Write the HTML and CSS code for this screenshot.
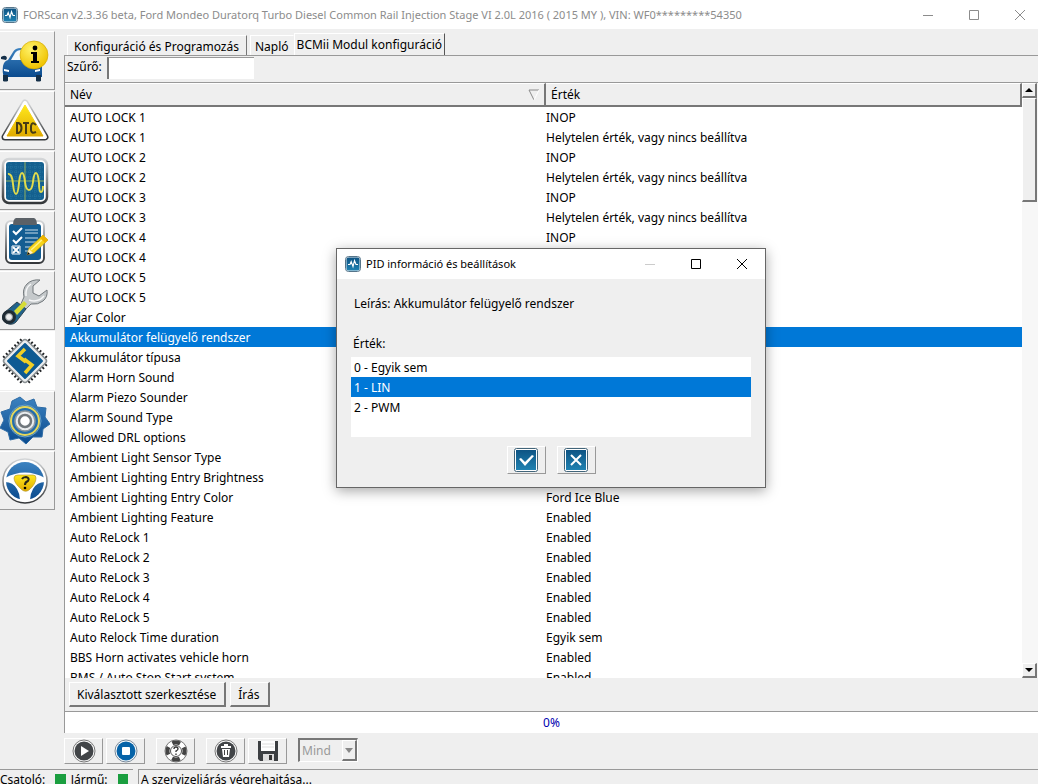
FILE: index.html
```html
<!DOCTYPE html>
<html lang="hu">
<head>
    <meta charset="UTF-8">
    <meta name="viewport" content="width=device-width, initial-scale=1.0">
    <title>FORScan</title>
    <link rel="stylesheet" href="styles.css">
</head>
<body>
    <!-- Shared gradients and the app logo -->
    <svg class="defs" width="0" height="0" aria-hidden="true">
        <defs>
            <linearGradient id="metal" x1="0" y1="0" x2="0" y2="1">
                <stop offset="0" stop-color="#d4d6d8"/>
                <stop offset="1" stop-color="#34373a"/>
            </linearGradient>
            <linearGradient id="blue" x1="0" y1="0" x2="0" y2="1">
                <stop offset="0" stop-color="#3c82c0"/>
                <stop offset="1" stop-color="#0b4b8e"/>
            </linearGradient>
            <linearGradient id="teal" x1="0" y1="0" x2="0" y2="1">
                <stop offset="0" stop-color="#0e5484"/>
                <stop offset="1" stop-color="#1f82b2"/>
            </linearGradient>
            <linearGradient id="yellow" x1="0" y1="0" x2="0" y2="1">
                <stop offset="0" stop-color="#ffe81c"/>
                <stop offset="1" stop-color="#e0ab00"/>
            </linearGradient>
            <radialGradient id="ball" cx=".4" cy=".3" r=".7">
                <stop offset="0" stop-color="#fff36a"/>
                <stop offset="1" stop-color="#efc200"/>
            </radialGradient>
            <symbol id="logo" viewBox="0 0 16 16">
                <rect x=".5" y=".5" width="15" height="15" rx="3" fill="#e8eef2" stroke="#56758a"/>
                <rect x="1.5" y="1.5" width="13" height="13" rx="2" fill="url(#teal)"/>
                <path d="M3 8.500h2l1.200-3 1.800 5 1.500-6 1.500 4H13" fill="none" stroke="#fff" stroke-width="1.100"/>
            </symbol>
        </defs>
    </svg>

    <div class="window">
        <header class="titlebar">
            <svg class="logo"><use href="#logo"/></svg>
            <span class="title">FORScan v2.3.36 beta, Ford Mondeo Duratorq Turbo Diesel Common Rail Injection Stage VI 2.0L 2016 ( 2015 MY ), VIN: WF0*********54350</span>
            <div class="win-buttons">
                <button type="button" aria-label="Minimize"><svg viewBox="0 0 12 12"><path d="M1 6.500h10"/></svg></button>
                <button type="button" aria-label="Maximize"><svg viewBox="0 0 12 12"><path d="M1.500 1.500h9v9h-9z"/></svg></button>
                <button type="button" aria-label="Close"><svg viewBox="0 0 12 12"><path d="M1 1l10 10M11 1L1 11"/></svg></button>
            </div>
        </header>

        <div class="content">
            <nav class="sidebar">
                <button type="button" aria-label="Jármű">
                    <svg viewBox="0 0 50 50">
                        <path d="M3 30q1-5 5-6l5-8q2-4 8-4h13q4 0 7 8l1 8v13H4q-2-4-1-11z" fill="url(#blue)"/>
                        <path d="M11 24l4-7q2-3 6-3h10v10z" fill="#f4f8fb"/>
                        <path d="M1 21q5-3 6 1l-1 2-5-1zM3 39h5v6q-3 1-5 0zM36 39h5v6q-3 1-5 0z" fill="#153049"/>
                        <path d="M4 33l5 1v2l-5-1zM35 34l5-1v2l-5 1z" fill="#fff"/>
                        <circle cx="34" cy="19" r="14" fill="url(#ball)" stroke="#cfa500" stroke-width=".6"/>
                        <circle cx="35" cy="12" r="2.400"/>
                        <path d="M31 16h6v9h2v2h-8v-2h2v-7h-2z"/>
                    </svg>
                </button>
                <button type="button" aria-label="DTC">
                    <svg viewBox="0 0 50 50">
                        <path d="M25 7L45 41H5z" fill="#fff" stroke="url(#metal)" stroke-width="7" stroke-linejoin="round"/>
                        <path d="M25 7L45 41H5z" fill="#fff" stroke="#fff" stroke-width="4" stroke-linejoin="round"/>
                        <path d="M25 9L43 40H7z" fill="url(#yellow)" stroke="url(#yellow)" stroke-width="1" stroke-linejoin="round"/>
                        <path d="M17 27v10h1.500q3-1 3-5t-3-5zM23 27h6M26 27v11M36 29q-4-4-5 1v4q0 4 5 2" fill="none" stroke="#463c15" stroke-width="2"/>
                    </svg>
                </button>
                <button type="button" aria-label="Oszcilloszkóp">
                    <svg viewBox="0 0 50 50">
                        <rect x="3" y="3" width="44" height="44" rx="6" fill="#fff" stroke="url(#metal)" stroke-width="2.500"/>
                        <rect x="6" y="6" width="38" height="38" rx="3" fill="#14608f"/>
                        <path d="M11 6v38M16 6v38M21 6v38M30 6v38M35 6v38M40 6v38M6 11h38M6 16h38M6 21h38M6 30h38M6 35h38M6 40h38" stroke="#2b80a6" stroke-width=".7" stroke-dasharray="1 1"/>
                        <path d="M25 6v38M6 25h38" stroke="#8fae60" stroke-width="1"/>
                        <path d="M8 18q4-1 5 10 1 10 3 10t3-11q1-10 3-10t3 9q1 8 4 8t4-8q1-9 3-9t3 10q0 9 2 9t2-6" fill="none" stroke="#e3dc4b" stroke-width="2"/>
                    </svg>
                </button>
                <button type="button" aria-label="Tesztek">
                    <svg viewBox="0 0 50 50">
                        <rect x="6" y="5" width="38" height="42" rx="5" fill="#fff" stroke="url(#metal)" stroke-width="2"/>
                        <rect x="9" y="8" width="32" height="36" rx="3" fill="#135d92"/>
                        <path d="M16 2h18q3 1 3 7H13q0-6 3-7z" fill="#5b6167"/>
                        <path d="M13 15l3 3 6-6M13 24l3 3 6-6M13 31l6 6M19 31l-6 6" fill="none" stroke="#fff" stroke-width="2"/>
                        <path d="M12 30h8v8h-8z" fill="none" stroke="#fff"/>
                        <path d="M25 14h13M25 17h13M25 22h13M25 26h11M25 31h8M25 35h4" stroke="#c8dce8" stroke-width="1.200"/>
                        <path d="M27 39l2-7 14-13 5 5-14 13z" fill="#f6d51b" stroke="#b69009" stroke-width=".6"/>
                        <path d="M31 34l14-13" stroke="#fff28e" stroke-width="1.500"/>
                        <path d="M40 22l3-3 5 5-3 3z" fill="#efb400"/>
                        <path d="M27 39l2-6 4 4z" fill="#ffeecb"/><path d="M27 39l1-3 2 2z"/>
                    </svg>
                </button>
                <button type="button" aria-label="Szerviz">
                    <svg viewBox="0 0 50 50">
                        <path d="M20 30L24 21q-2-8 3-13 5-5 13-4l-7 6 0 7 6 3 8-6q1 7-4 11-5 4-12 3L23 36z" fill="#c5c9cb" stroke="#73797d"/>
                        <path d="M26 20q-1-8 5-12M29 24q9 3 15-4" fill="none" stroke="#f6f7f8" stroke-width="1.500"/>
                        <path d="M17 26l9 7-10 13q-4 4-10 1-6-4-2-10z" fill="#20638c" stroke="#2f4552"/>
                        <path d="M14 35l10-10 3 3-10 11z" fill="#d6dc35"/>
                        <circle cx="9" cy="41" r="7" fill="#202b33"/>
                        <circle cx="9" cy="41" r="3.500" fill="#eee" stroke="#8b9398"/>
                    </svg>
                </button>
                <button type="button" class="current" aria-label="Konfiguráció és Programozás">
                    <svg viewBox="0 0 50 50">
                        <g transform="rotate(45 25 25)">
                            <path d="M13 6v38M17 6v38M21 6v38M25 6v38M29 6v38M33 6v38M37 6v38M6 13h38M6 17h38M6 21h38M6 25h38M6 29h38M6 33h38M6 37h38" stroke="#202326" stroke-width="1.800"/>
                            <rect x="9" y="9" width="32" height="32" rx="3" fill="#eceeef" stroke="#8b9194" stroke-width="1.500"/>
                            <rect x="12" y="12" width="26" height="26" rx="1" fill="#0d5a93"/>
                        </g>
                        <path d="M25 13l-7 7 8 6M25 37l7-8-8-6" fill="none" stroke="#f1cf25" stroke-width="3.500"/>
                    </svg>
                </button>
                <button type="button" aria-label="Beállítások">
                    <svg viewBox="0 0 50 50">
                        <path d="M20 1l6 5 8-3 3 8 9 1-1 9 5 7-7 5-1 8-9 0-7 7-7-6-9 2-2-8-8-4 4-8-3-8 9-3 2-8z" fill="url(#blue)" stroke="#2e6ca6"/>
                        <circle cx="25" cy="25" r="16" fill="#226dac" stroke="#6ba0c5" stroke-width="1"/>
                        <circle cx="25" cy="25" r="14" fill="none" stroke="#e6d75a" stroke-width="2"/>
                        <circle cx="25" cy="25" r="10" fill="#e9ecee" stroke="#8b979e" stroke-width="1.500"/>
                        <circle cx="25" cy="25" r="6" fill="#fff" stroke="#70777c" stroke-width="2.500"/>
                    </svg>
                </button>
                <button type="button" aria-label="Súgó">
                    <svg viewBox="0 0 50 50">
                        <circle cx="25" cy="25" r="22" fill="#fff" stroke="url(#metal)" stroke-width="1.500"/>
                        <circle cx="25" cy="25" r="19" fill="url(#blue)"/>
                        <path d="M5 22Q25 11 45 22v4q-8 0-12 7-3 5-3 11H20q0-6-3-11-4-7-12-7z" fill="#fff"/>
                        <path d="M18 19h15q3 0 3 3 0 6-7 12-4 3-8-1-7-6-7-11 0-3 4-3z" fill="url(#yellow)" stroke="#ad922a" stroke-width=".6"/>
                        <path d="M22 23q1-2 4-2 4 1 2 4-3 1-3 4" fill="none" stroke="#272719" stroke-width="2"/>
                        <circle cx="25" cy="32" r="1.300"/>
                    </svg>
                </button>
            </nav>

            <main class="main">
                <div class="tabs" role="tablist">
                    <button type="button" role="tab">Konfiguráció és Programozás</button>
                    <button type="button" role="tab">Napló</button>
                    <button type="button" role="tab" class="active" aria-selected="true">BCMii Modul konfiguráció</button>
                </div>

                <section class="panel">
                    <div class="filter">
                        <label for="filter">Szűrő:</label>
                        <input type="text" id="filter">
                    </div>

                    <div class="list">
                        <div class="table-wrap">
                            <table>
                                <thead>
                                    <tr>
                                        <th class="col-name"><div class="th-inner">Név <svg viewBox="0 0 12 12"><path d="M11 1H1l5 10" stroke="#8a8a8a" fill="none"/><path d="M6 11l5-10" stroke="#fff"/></svg></div></th>
                                        <th>Érték</th>
                                    </tr>
                                </thead>
                                <tbody>
                                    <tr><td>AUTO LOCK 1</td><td>INOP</td></tr>
                                    <tr><td>AUTO LOCK 1</td><td>Helytelen érték, vagy nincs beállítva</td></tr>
                                    <tr><td>AUTO LOCK 2</td><td>INOP</td></tr>
                                    <tr><td>AUTO LOCK 2</td><td>Helytelen érték, vagy nincs beállítva</td></tr>
                                    <tr><td>AUTO LOCK 3</td><td>INOP</td></tr>
                                    <tr><td>AUTO LOCK 3</td><td>Helytelen érték, vagy nincs beállítva</td></tr>
                                    <tr><td>AUTO LOCK 4</td><td>INOP</td></tr>
                                    <tr><td>AUTO LOCK 4</td><td></td></tr>
                                    <tr><td>AUTO LOCK 5</td><td></td></tr>
                                    <tr><td>AUTO LOCK 5</td><td></td></tr>
                                    <tr><td>Ajar Color</td><td></td></tr>
                                    <tr class="selected"><td>Akkumulátor felügyelő rendszer</td><td></td></tr>
                                    <tr><td>Akkumulátor típusa</td><td></td></tr>
                                    <tr><td>Alarm Horn Sound</td><td></td></tr>
                                    <tr><td>Alarm Piezo Sounder</td><td></td></tr>
                                    <tr><td>Alarm Sound Type</td><td></td></tr>
                                    <tr><td>Allowed DRL options</td><td></td></tr>
                                    <tr><td>Ambient Light Sensor Type</td><td></td></tr>
                                    <tr><td>Ambient Lighting Entry Brightness</td><td></td></tr>
                                    <tr><td>Ambient Lighting Entry Color</td><td>Ford Ice Blue</td></tr>
                                    <tr><td>Ambient Lighting Feature</td><td>Enabled</td></tr>
                                    <tr><td>Auto ReLock 1</td><td>Enabled</td></tr>
                                    <tr><td>Auto ReLock 2</td><td>Enabled</td></tr>
                                    <tr><td>Auto ReLock 3</td><td>Enabled</td></tr>
                                    <tr><td>Auto ReLock 4</td><td>Enabled</td></tr>
                                    <tr><td>Auto ReLock 5</td><td>Enabled</td></tr>
                                    <tr><td>Auto Relock Time duration</td><td>Egyik sem</td></tr>
                                    <tr><td>BBS Horn activates vehicle horn</td><td>Enabled</td></tr>
                                    <tr><td>BMS / Auto Stop Start system</td><td>Enabled</td></tr>
                                </tbody>
                            </table>
                        </div>
                        <div class="scrollbar">
                            <button type="button" aria-label="Fel"><svg viewBox="0 0 8 4"><path d="M4 0l4 4H0z"/></svg></button>
                            <div class="thumb"></div>
                            <button type="button" class="down" aria-label="Le"><svg viewBox="0 0 8 4"><path d="M0 0h8L4 4z"/></svg></button>
                        </div>
                    </div>

                    <div class="actions">
                        <button type="button">Kiválasztott szerkesztése</button>
                        <button type="button">Írás</button>
                    </div>
                </section>

                <div class="progress">0%</div>

                <div class="toolbar">
                    <button type="button" aria-label="Indítás">
                        <svg viewBox="0 0 24 24"><circle cx="12" cy="12" r="11" fill="#fff" stroke="#777"/><circle cx="12" cy="12" r="9.500" fill="#424548"/><path d="M9 7l8 5-8 5z" fill="#fff"/></svg>
                    </button>
                    <button type="button" class="group-end" aria-label="Leállítás">
                        <svg viewBox="0 0 24 24"><circle cx="12" cy="12" r="11" fill="#fff" stroke="#789"/><circle cx="12" cy="12" r="9.500" fill="#0663a8"/><rect x="8" y="8" width="8" height="8" rx="1" fill="#fff"/></svg>
                    </button>
                    <button type="button" class="group-end" aria-label="Súgó">
                        <svg viewBox="0 0 24 24"><circle cx="12" cy="12" r="11" fill="#fff" stroke="#777"/><circle cx="12" cy="12" r="8.500" fill="none" stroke="#444" stroke-width="4" stroke-dasharray="8 5.350" stroke-dashoffset="4"/><circle cx="12" cy="12" r="5.500" fill="#fff" stroke="#555"/><path d="M10 10q0-2 2-2t2 2q0 1-2 2v1M12 14.500v1.500" fill="none" stroke="#333" stroke-width="1.300"/></svg>
                    </button>
                    <button type="button" aria-label="Törlés">
                        <svg viewBox="0 0 24 24"><circle cx="12" cy="12" r="11" fill="#fff" stroke="#777"/><circle cx="12" cy="12" r="9.500" fill="#424548"/><path d="M7 7h10v2H7zM10 5h4v2h-4zM8 10h8l-1 8H9z" fill="#fff"/><path d="M10.500 11v5M13.500 11v5" stroke="#444"/></svg>
                    </button>
                    <button type="button" aria-label="Mentés">
                        <svg viewBox="0 0 24 24"><path d="M2 2h20v20H4l-2-2z" fill="#3c3f42"/><path d="M5 2h14v10H5z" fill="#fff"/><path d="M6 5h12M6 8h12" stroke="#ddd"/><path d="M7 15h11v7H7z" fill="#ddd"/><path d="M13 16h3v5h-3z" fill="#333"/></svg>
                    </button>
                    <div class="combo">
                        <select aria-label="Modul" disabled><option>Mind</option></select>
                        <span class="combo-arrow"><svg viewBox="0 0 8 5"><path d="M0 0h8L4 5z"/></svg></span>
                    </div>
                </div>
            </main>
        </div>

        <footer class="statusbar">
            <div class="status-cell links">
                <span>Csatoló:</span><i class="led"></i>
                <span>Jármű:</span><i class="led"></i>
            </div>
            <div class="status-cell message">A szervizeljárás végrehajtása...</div>
        </footer>
    </div>

    <div class="dialog" role="dialog" aria-labelledby="dialogTitle">
        <div class="dialog-title">
            <svg class="logo"><use href="#logo"/></svg>
            <span class="title" id="dialogTitle">PID információ és beállítások</span>
            <div class="win-buttons">
                <button type="button" class="off" aria-label="Minimize" disabled><svg viewBox="0 0 12 12"><path d="M1 6.500h10"/></svg></button>
                <button type="button" aria-label="Maximize"><svg viewBox="0 0 12 12"><path d="M1.500 1.500h9v9h-9z"/></svg></button>
                <button type="button" aria-label="Close"><svg viewBox="0 0 12 12"><path d="M1 1l10 10M11 1L1 11"/></svg></button>
            </div>
        </div>
        <div class="dialog-body">
            <p>Leírás: Akkumulátor felügyelő rendszer</p>
            <label for="value">Érték:</label>
            <select id="value" size="4">
                <option>0 - Egyik sem</option>
                <option selected>1 - LIN</option>
                <option>2 - PWM</option>
            </select>
            <div class="dialog-buttons">
                <button type="button" aria-label="OK">
                    <svg viewBox="0 0 24 24"><rect x=".5" y=".5" width="23" height="23" rx="2" fill="#fff" stroke="#42657a"/><rect x="2" y="2" width="20" height="20" fill="url(#teal)"/><path d="M5 11l2-1 4 4 7-7 2 1-9 10z" fill="#fff"/></svg>
                </button>
                <button type="button" aria-label="Mégse">
                    <svg viewBox="0 0 24 24"><rect x=".5" y=".5" width="23" height="23" rx="2" fill="#fff" stroke="#42657a"/><rect x="2" y="2" width="20" height="20" fill="url(#teal)"/><path d="M7 7l10 10M17 7L7 17" stroke="#fff" stroke-width="2"/></svg>
                </button>
            </div>
        </div>
    </div>
</body>
</html>
```
FILE: styles.css
```css
* {
    box-sizing: border-box;
}
body {
    margin: 0;
    background: #efefef;
    color: #000;
    font-family: "Noto Sans", sans-serif;
    font-size: 12px;
    line-height: 20px;
    overflow: hidden;
}
button, input, select {
    font: inherit;
    color: inherit;
    margin: 0;
    padding: 0;
}
svg {
    display: block;
}
.defs {
    position: absolute;
}
.window {
    display: flex;
    flex-direction: column;
    height: 100vh;
}

/* Title bars */
.titlebar, .dialog-title {
    display: flex;
    align-items: center;
    background: #fff;
    font-size: 11px;
}
.titlebar {
    height: 29px;
    padding-left: 2px;
    color: #8c8c8c;
}
.logo {
    width: 16px;
    height: 16px;
    flex: none;
}
.title {
    flex: 1;
    padding-left: 5px;
    white-space: nowrap;
}
.win-buttons {
    display: flex;
}
.win-buttons button {
    width: 46px;
    height: 28px;
    border: 0;
    background: none;
    display: flex;
    align-items: center;
    justify-content: center;
}
.win-buttons svg {
    width: 12px;
    height: 12px;
    fill: none;
    stroke: currentColor;
}
.titlebar .win-buttons {
    margin-right: -5px;
}

.content {
    flex: 1;
    display: flex;
    min-height: 0;
}

/* Left icon bar */
.sidebar {
    width: 64px;
    flex: none;
    display: flex;
    flex-direction: column;
    gap: 1px;
    padding-top: 2px;
}
.sidebar button {
    width: 55px;
    height: 59px;
    border: 0;
    border-right: 1px solid #999;
    border-bottom: 1px solid #999;
    border-top: 1px solid #fff;
    background: #efefef;
}
.sidebar svg {
    width: 50px;
    height: 50px;
}
.sidebar .current {
    background: #fff;
    border-color: #fff;
}

.main {
    flex: 1;
    display: flex;
    flex-direction: column;
    min-width: 0;
}

/* Tabs */
.tabs {
    display: flex;
    align-items: flex-end;
    height: 26px;
    padding-left: 3px;
}
.tabs button {
    height: 20px;
    padding: 2px 7px 0 6px;
    border: 0;
    border-top: 1px solid #fff;
    border-left: 1px solid #fff;
    border-right: 1px solid #777;
    background: #efefef;
    line-height: 18px;
    margin-right: 3px;
    white-space: nowrap;
}
.tabs button + button {
    padding: 2px 4px 0;
    border-right-color: #efefef;
    margin-right: 0;
}
.tabs .active.active {
    height: 22px;
    padding: 0 2px;
    border-right-color: #555;
}
.panel {
    flex: 1;
    display: flex;
    flex-direction: column;
    min-height: 0;
    border-top: 1px solid #999;
    border-left: 1px solid #999;
}
.filter {
    display: flex;
    height: 26px;
    padding: 1px 0 0 2px;
}
.filter label {
    width: 40px;
}
.filter input {
    width: 147px;
    height: 22px;
    border: 0;
    border-top: 1px solid #999;
    border-left: 2px solid #777;
    background: #fff;
    padding: 0 3px;
}

/* Parameter list */
.list {
    flex: 1;
    display: flex;
    min-height: 0;
    background: #fff;
    border-top: 1px solid #999;
}
.table-wrap {
    flex: 1;
    overflow: hidden;
}
table {
    width: 100%;
    border-collapse: separate;
    border-spacing: 0;
    table-layout: fixed;
}
th {
    height: 24px;
    padding: 1px 4px 0 5px;
    background: #efefef;
    border-right: 2px solid #777;
    border-bottom: 2px solid #777;
    border-top: 1px solid #fff;
    font-weight: normal;
    text-align: left;
}
.col-name {
    width: 481px;
}
.th-inner {
    display: flex;
    align-items: center;
    justify-content: space-between;
}
.th-inner svg {
    width: 12px;
    height: 12px;
}
td {
    height: 20px;
    padding: 2px 5px 0;
    line-height: 18px;
    white-space: nowrap;
}
td + td {
    padding: 2px 0 0;
}
.selected td {
    background: #0078d7;
    color: #fff;
}
.scrollbar {
    width: 16px;
    flex: none;
    display: flex;
    flex-direction: column;
    background: #f7f7f7;
}
.scrollbar button, .thumb {
    width: 15px;
    border: 1px solid #fff;
    border-right: 2px solid #777;
    border-bottom: 2px solid #777;
    background: #efefef;
}
.scrollbar button {
    height: 15px;
    display: flex;
    align-items: center;
    justify-content: center;
}
.scrollbar svg {
    width: 8px;
    height: 4px;
}
.thumb {
    height: 104px;
}
.scrollbar .down {
    margin-top: auto;
}

/* Buttons below the list */
.actions {
    display: flex;
    gap: 4px;
    padding: 4px;
    height: 33px;
}
.actions button {
    height: 25px;
    padding: 2px 8px 0 7px;
    line-height: 20px;
    background: #efefef;
    border: 1px solid #fff;
    border-right: 2px solid #777;
    border-bottom: 2px solid #777;
}
.progress {
    height: 22px;
    background: #fff;
    border-top: 1px solid #999;
    border-left: 1px solid #999;
    color: #0000b0;
    line-height: 22px;
    text-align: center;
}

/* Bottom toolbar */
.toolbar {
    display: flex;
    gap: 3px;
    height: 36px;
    padding-top: 5px;
}
.toolbar button, .dialog-buttons button {
    width: 39px;
    height: 26px;
    display: flex;
    align-items: center;
    justify-content: center;
    background: #efefef;
    border: 1px solid #fff;
    border-right-color: #999;
    border-bottom-color: #999;
}
.toolbar button svg, .dialog-buttons svg {
    width: 24px;
    height: 24px;
    flex: none;
}
.toolbar .group-end {
    margin-right: 8px;
}
.combo {
    display: flex;
    width: 60px;
    height: 24px;
    margin-left: 8px;
    border: 2px solid #777;
    border-right: 1px solid #fff;
    border-bottom: 1px solid #fff;
}
.combo select {
    flex: 1;
    min-width: 0;
    appearance: none;
    border: 0;
    background: none;
    padding-left: 2px;
    color: #999;
    opacity: 1;
}
.combo-arrow {
    width: 15px;
    display: flex;
    align-items: center;
    justify-content: center;
    border: 1px solid #fff;
    border-right: 2px solid #777;
    border-bottom: 2px solid #777;
}
.combo-arrow svg {
    width: 8px;
    height: 5px;
    fill: #888;
}

/* Status bar */
.statusbar {
    display: flex;
    gap: 5px;
    height: 15px;
    overflow: hidden;
}
.status-cell {
    border-top: 1px solid #999;
    white-space: nowrap;
}
.links {
    display: flex;
    width: 133px;
}
.led {
    width: 11px;
    height: 11px;
    margin: 4px 5px 0 10px;
    background: #1a9e3f;
}
.message {
    flex: 1;
    border-left: 1px solid #999;
    padding-left: 2px;
}

/* PID dialog */
.dialog {
    position: absolute;
    left: 336px;
    top: 248px;
    width: 430px;
    background: #efefef;
    border: 1px solid #666;
    box-shadow: 0 3px 12px rgba(0, 0, 0, 0.35);
}
.dialog-title {
    height: 30px;
    padding-left: 8px;
}
.dialog-title .off {
    color: #ccc;
}
.dialog-body {
    padding: 15px 14px 13px;
}
.dialog-body p {
    margin: 0 0 20px;
    padding-left: 3px;
}
.dialog-body label {
    display: block;
    height: 23px;
    padding-left: 2px;
}
.dialog-body select {
    display: block;
    width: 100%;
    height: 80px;
    border: 0;
    border-radius: 0;
    background: #fff;
    overflow: hidden;
    outline: none;
}
.dialog-body option {
    height: 20px;
    padding: 2px 3px;
}
.dialog-body option:checked {
    background: linear-gradient(#0078d7, #0078d7);
    -webkit-text-fill-color: #fff;
}
.dialog-buttons {
    display: flex;
    justify-content: center;
    gap: 11px;
    padding-top: 9px;
}
.dialog-buttons button {
    height: 28px;
}
```
